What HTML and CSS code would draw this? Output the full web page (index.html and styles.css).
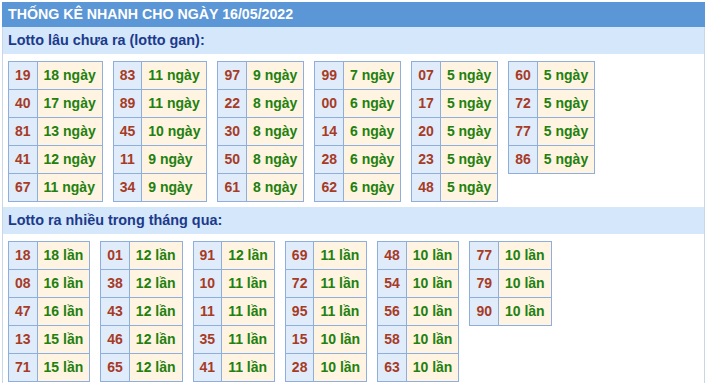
FILE: index.html
```html
<!DOCTYPE html>
<html lang="vi">
<head>
<meta charset="utf-8">
<title>Thống kê nhanh</title>
<link rel="stylesheet" href="styles.css">
</head>
<body>
<div class="box">
  <div class="title">THỐNG KÊ NHANH CHO NGÀY 16/05/2022</div>
  <div class="sub">Lotto lâu chưa ra (lotto gan):</div>
  <div class="tables">
    <table><tr><td class="n">19</td><td class="v">18 ngày</td></tr><tr><td class="n">40</td><td class="v">17 ngày</td></tr><tr><td class="n">81</td><td class="v">13 ngày</td></tr><tr><td class="n">41</td><td class="v">12 ngày</td></tr><tr><td class="n">67</td><td class="v">11 ngày</td></tr></table>
    <table><tr><td class="n">83</td><td class="v">11 ngày</td></tr><tr><td class="n">89</td><td class="v">11 ngày</td></tr><tr><td class="n">45</td><td class="v">10 ngày</td></tr><tr><td class="n">11</td><td class="v">9 ngày</td></tr><tr><td class="n">34</td><td class="v">9 ngày</td></tr></table>
    <table><tr><td class="n">97</td><td class="v">9 ngày</td></tr><tr><td class="n">22</td><td class="v">8 ngày</td></tr><tr><td class="n">30</td><td class="v">8 ngày</td></tr><tr><td class="n">50</td><td class="v">8 ngày</td></tr><tr><td class="n">61</td><td class="v">8 ngày</td></tr></table>
    <table><tr><td class="n">99</td><td class="v">7 ngày</td></tr><tr><td class="n">00</td><td class="v">6 ngày</td></tr><tr><td class="n">14</td><td class="v">6 ngày</td></tr><tr><td class="n">28</td><td class="v">6 ngày</td></tr><tr><td class="n">62</td><td class="v">6 ngày</td></tr></table>
    <table><tr><td class="n">07</td><td class="v">5 ngày</td></tr><tr><td class="n">17</td><td class="v">5 ngày</td></tr><tr><td class="n">20</td><td class="v">5 ngày</td></tr><tr><td class="n">23</td><td class="v">5 ngày</td></tr><tr><td class="n">48</td><td class="v">5 ngày</td></tr></table>
    <table><tr><td class="n">60</td><td class="v">5 ngày</td></tr><tr><td class="n">72</td><td class="v">5 ngày</td></tr><tr><td class="n">77</td><td class="v">5 ngày</td></tr><tr><td class="n">86</td><td class="v">5 ngày</td></tr></table>
  </div>
  <div class="sub">Lotto ra nhiều trong tháng qua:</div>
  <div class="tables">
    <table><tr><td class="n">18</td><td class="v">18 lần</td></tr><tr><td class="n">08</td><td class="v">16 lần</td></tr><tr><td class="n">47</td><td class="v">16 lần</td></tr><tr><td class="n">13</td><td class="v">15 lần</td></tr><tr><td class="n">71</td><td class="v">15 lần</td></tr></table>
    <table><tr><td class="n">01</td><td class="v">12 lần</td></tr><tr><td class="n">38</td><td class="v">12 lần</td></tr><tr><td class="n">43</td><td class="v">12 lần</td></tr><tr><td class="n">46</td><td class="v">12 lần</td></tr><tr><td class="n">65</td><td class="v">12 lần</td></tr></table>
    <table><tr><td class="n">91</td><td class="v">12 lần</td></tr><tr><td class="n">10</td><td class="v">11 lần</td></tr><tr><td class="n">11</td><td class="v">11 lần</td></tr><tr><td class="n">35</td><td class="v">11 lần</td></tr><tr><td class="n">41</td><td class="v">11 lần</td></tr></table>
    <table><tr><td class="n">69</td><td class="v">11 lần</td></tr><tr><td class="n">72</td><td class="v">11 lần</td></tr><tr><td class="n">95</td><td class="v">11 lần</td></tr><tr><td class="n">15</td><td class="v">10 lần</td></tr><tr><td class="n">28</td><td class="v">10 lần</td></tr></table>
    <table><tr><td class="n">48</td><td class="v">10 lần</td></tr><tr><td class="n">54</td><td class="v">10 lần</td></tr><tr><td class="n">56</td><td class="v">10 lần</td></tr><tr><td class="n">58</td><td class="v">10 lần</td></tr><tr><td class="n">63</td><td class="v">10 lần</td></tr></table>
    <table><tr><td class="n">77</td><td class="v">10 lần</td></tr><tr><td class="n">79</td><td class="v">10 lần</td></tr><tr><td class="n">90</td><td class="v">10 lần</td></tr></table>
  </div>
</div>
</body>
</html>
```
FILE: styles.css
```css
html, body {
  margin: 0;
  padding: 0;
  background: #ffffff;
}
body {
  font-family: "Liberation Sans", Arial, sans-serif;
  font-size: 14px;
  font-weight: bold;
}
.box {
  margin: 2px 0 0 2px;
  width: 703px;
  box-sizing: border-box;
  border: 1px solid #c9d6e6;
  border-top: 0;
}
.title {
  margin: 0 -1px;
  height: 25px;
  line-height: 25px;
  padding-left: 6px;
  background: #5b96d6;
  color: #ffffff;
  font-size: 14.2px;
}
.sub {
  height: 27px;
  line-height: 27px;
  padding-left: 5px;
  background: #d5e7fa;
  color: #1b3a8c;
  font-size: 14.4px;
}
.tables {
  display: flex;
  align-items: flex-start;
  gap: 10px;
  padding: 7px 0 5px 5px;
}
table {
  border-collapse: collapse;
}
td {
  border: 1px solid #8eaede;
  line-height: 27px;
  height: 27px;
  padding: 0 6px;
  white-space: nowrap;
}
td.n {
  background: #e1ecfb;
  color: #a63b26;
  text-align: center;
}
td.v {
  background: #fff4e1;
  color: #22800f;
  text-align: left;
}
```
